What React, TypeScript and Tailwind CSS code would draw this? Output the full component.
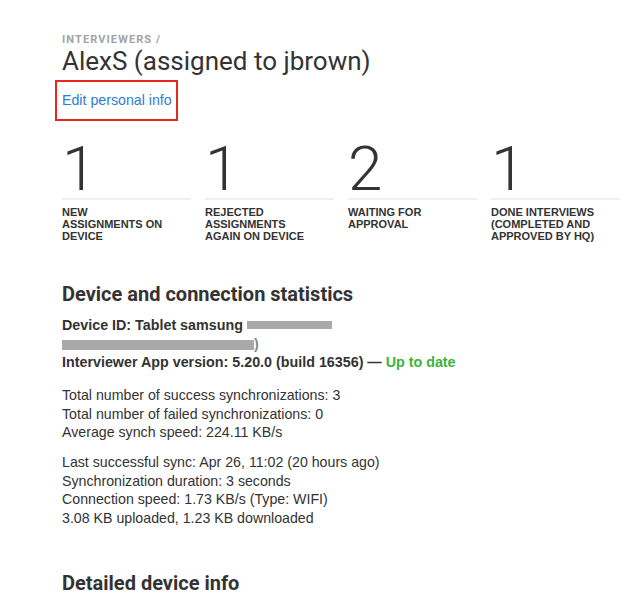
const stats = [
  { value: "1", label: ["NEW", "ASSIGNMENTS ON", "DEVICE"] },
  { value: "1", label: ["REJECTED", "ASSIGNMENTS", "AGAIN ON DEVICE"] },
  { value: "2", label: ["WAITING FOR", "APPROVAL"] },
  { value: "1", label: ["DONE INTERVIEWS", "(COMPLETED AND", "APPROVED BY HQ)"] },
]

export default function App() {
  return (
    <div className="min-h-[600px] bg-white px-[62px] pt-[33px] text-[#333] font-['Liberation_Sans',Arial,sans-serif]">
      <div className="text-[11px] leading-[13px] font-bold tracking-[0.1em] text-[#a3a3a3] font-['Roboto',sans-serif]">
        INTERVIEWERS /
      </div>
      <h1 className="text-[26px] leading-[30px] font-normal text-[#333] font-['Roboto',sans-serif]">
        AlexS (assigned to jbrown)
      </h1>
      <div className="mt-[4px] -ml-[7px] flex h-[41px] w-[123px] items-center border-2 border-[#e8271f] pl-[5px]">
        <a href="#" className="text-[14.2px] text-[#2f7cd3]">
          Edit personal info
        </a>
      </div>

      <div className="mt-[19px] grid grid-cols-[129px_129px_129px_129px] gap-x-[14px]">
        {stats.map((s, i) => (
          <div key={i} className="flex flex-col">
            <div className="text-[62px] leading-[58px] font-light text-[#333] font-['Roboto',sans-serif]">{s.value}</div>
            <div className="h-[2px] bg-[#efefef]" />
            <div className="mt-[6px] text-[11px] leading-[12px] font-bold text-[#333]">
              {s.label.map((l, j) => (
                <div key={j}>{l}</div>
              ))}
            </div>
          </div>
        ))}
      </div>

      <h2 className="mt-[40px] text-[20px] leading-[24px] font-bold text-[#333] font-['Roboto',sans-serif]">
        Device and connection statistics
      </h2>

      <div className="mt-[10px] text-[14.3px] leading-[18.5px] font-bold">
        <div>
          Device ID: Tablet samsung{" "}
          <span className="inline-block h-[8px] w-[85px] bg-[#a9a9a9] align-[1px] blur-[0.4px]" />
        </div>
        <div>
          <span className="inline-block h-[10px] w-[192px] bg-[#a9a9a9] align-[-1px] blur-[0.4px]" />
          <span className="text-[#888]">)</span>
        </div>
        <div>
          Interviewer App version: 5.20.0 (build 16356) — <span className="text-[#3db336]">Up to date</span>
        </div>
      </div>

      <div className="mt-[14.5px] text-[14.2px] leading-[18.5px]">
        <div>Total number of success synchronizations: 3</div>
        <div>Total number of failed synchronizations: 0</div>
        <div>Average synch speed: 224.11 KB/s</div>
      </div>

      <div className="mt-[11.5px] text-[14.2px] leading-[18.5px]">
        <div>Last successful sync: Apr 26, 11:02 (20 hours ago)</div>
        <div>Synchronization duration: 3 seconds</div>
        <div>Connection speed: 1.73 KB/s (Type: WIFI)</div>
        <div>3.08 KB uploaded, 1.23 KB downloaded</div>
      </div>

      <h2 className="mt-[44px] text-[20px] leading-[24px] font-bold text-[#333] font-['Roboto',sans-serif]">
        Detailed device info
      </h2>
    </div>
  )
}
